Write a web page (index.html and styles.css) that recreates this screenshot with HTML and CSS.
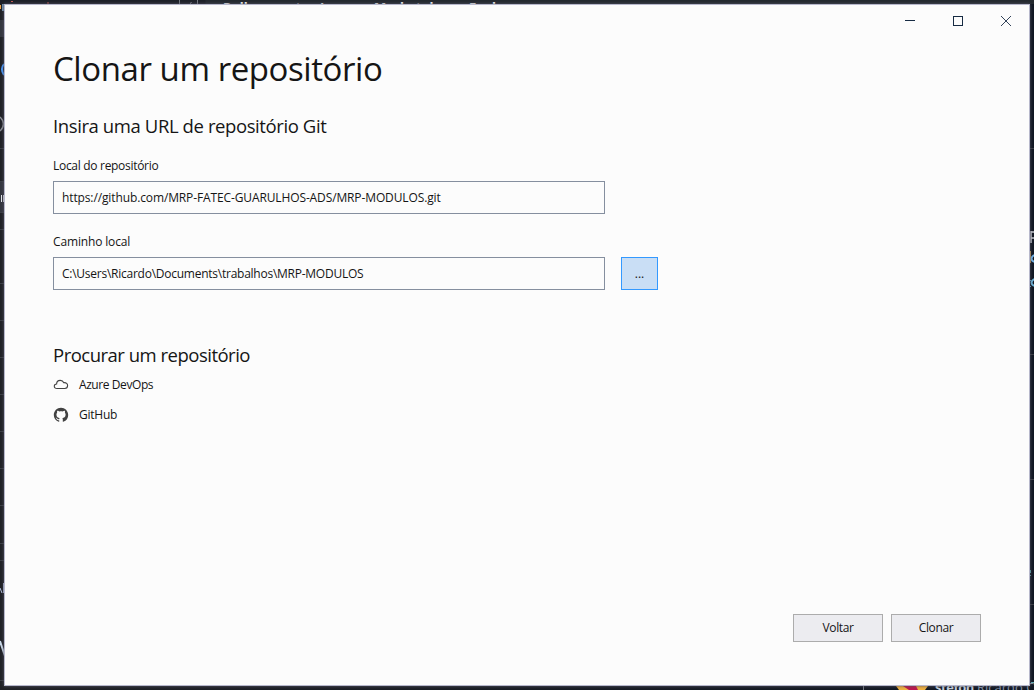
FILE: index.html
```html
<!DOCTYPE html>
<html lang="pt-BR">
<head>
<meta charset="utf-8">
<title>Clonar um repositório</title>
<link rel="stylesheet" href="styles.css">
</head>
<body>
<div class="desktop" aria-hidden="true">
  <div class="strip top"></div>
  <span class="behind nav n1">Pull requests</span>
  <span class="behind nav n2">Issues</span>
  <span class="behind nav n3">Marketplace</span>
  <span class="behind nav n4">Explore</span>
  <svg class="scene" width="1034" height="690" viewBox="0 0 1034 690">
    <path d="M0 20.5h5M0 148.5h5M0 181.5h5M0 212.5h5M0 229.5h5M0 283.5h5M0 320.5h5M0 357.5h5M0 394.5h5M0 431.5h5M0 468.5h5M0 505.5h5M0 543.5h5M0 560.5h5M0 680.5h5M1029 148.5h5M1029 354.5h5M1029 479.5h5M1029 604.5h5" stroke="#3b3e45"/>
    <path d="M0 20h5v17H0zM0 182h5v30H0z" fill="#34363f"/>
    <path d="M179.500 0v4M197.500 0v4M863.500 686v4" stroke="#777b83"/>
    <path d="M190 3.500l1.500-1" stroke="#9ca0a8"/>
    <path d="M11 1.500h2M47 3h2" stroke="#c65b55"/>
    <path d="M0 5h1v4H0z" fill="#eca54a"/>
    <path d="M2 4h2v7H2z" fill="#7797b3"/>
    <path d="M4 64q-4 5 0 11" fill="none" stroke="#4a9cff" stroke-width="2"/>
    <path d="M0 117q7 7 0 14" fill="none" stroke="#8b8e95" stroke-width="1.500"/>
    <path d="M1 195h1v7H1zM3 195h1v7H3z" fill="#e8ebf0"/>
    <path d="M0 588l2 5M3.500 583v10" fill="none" stroke="#b9c5e2"/>
    <path d="M0 641l5 15" fill="none" stroke="#cbd9e9" stroke-width="2"/>
    <path d="M1031 231v12M1031 232h3M1031 238h3" fill="none" stroke="#c9ccd2" stroke-width="1.500"/>
    <path d="M1030.500 251v12" stroke="#c69b59"/>
    <path d="M1034 255q-5 4 0 7" fill="none" stroke="#73b4e8" stroke-width="2"/>
    <path d="M1034 279q-5 4 0 7M1030 280v1M1030 286v1" fill="none" stroke="#70b6dc" stroke-width="2"/>
    <path d="M1030 570h1v3h-1zM1030 575h1v1h-1zM1031 682h3v1h-3z" fill="#5faeb4"/>
    <path d="M896 686h32l-3 4h-26z" fill="#f0b03f"/>
    <path d="M903 686h13l2 4h-9z" fill="#bd164c"/>
  </svg>
  <span class="behind foot f1">stefon</span>
  <span class="behind foot f2">Ricardo C</span>
</div>
<main class="window">
  <header class="titlebar">
    <svg class="control" viewBox="0 0 48 32"><path d="M19 16.500h10"/></svg>
    <svg class="control" viewBox="0 0 48 32"><rect x="19.500" y="12.500" width="9" height="9"/></svg>
    <svg class="control close" viewBox="0 0 48 32"><path d="M19 12l10 10M29 12l-10 10"/></svg>
  </header>
  <section class="content">
    <h1><span class="t-title">Clonar um repositório</span></h1>
    <h2 class="url-heading"><span class="t-url">Insira uma URL de repositório Git</span></h2>
    <label class="first-label"><span class="t-local">Local do repositório</span></label>
    <div class="field"><span class="t-git">https://github.com/MRP-FATEC-GUARULHOS-ADS/MRP-MODULOS.git</span></div>
    <label class="second-label"><span class="t-path-label">Caminho local</span></label>
    <div class="path-row">
      <div class="field"><span class="t-path">C:\Users\Ricardo\Documents\trabalhos\MRP-MODULOS</span></div>
      <button class="browse">...</button>
    </div>
    <h2 class="search-heading"><span class="t-search">Procurar um repositório</span></h2>
    <div class="provider">
      <svg width="16" height="16" viewBox="0 0 16 16"><path d="M4 12.500C2.300 12.500 1.300 11.500 1.300 10.200C1.300 8.900 2.300 8 3.600 8C3.700 5.600 5.300 4.400 7.200 4.400C8.900 4.400 10.200 5.300 10.800 6.700C13.300 6.400 14.600 7.700 14.600 9.500C14.600 11.300 13.500 12.500 11.800 12.500Z" fill="none" stroke="#424242" stroke-width="1.100"/></svg>
      <span class="t-azure">Azure DevOps</span>
    </div>
    <div class="provider">
      <svg width="16" height="16" viewBox="0 0 16 16"><path transform="translate(.8 .8) scale(.9)" fill="#424242" d="M8 0C3.580 0 0 3.580 0 8c0 3.540 2.290 6.530 5.470 7.590.4.070.55-.17.55-.38 0-.19-.01-.82-.01-1.490-2.010.37-2.530-.49-2.690-.94-.09-.23-.48-.94-.82-1.130-.28-.15-.68-.52-.01-.53.63-.01 1.080.58 1.230.82.72 1.210 1.870.87 2.330.66.07-.52.28-.87.51-1.070-1.780-.2-3.640-.89-3.640-3.950 0-.87.31-1.590.82-2.150-.08-.2-.36-1.020.08-2.120 0 0 .67-.21 2.200.82.64-.18 1.320-.27 2-.27s1.360.09 2 .27c1.530-1.040 2.200-.82 2.200-.82.44 1.100.16 1.920.08 2.120.51.56.82 1.270.82 2.150 0 3.070-1.870 3.750-3.650 3.950.29.25.54.73.54 1.480 0 1.070-.01 1.930-.01 2.200 0 .21.15.46.55.38A8 8 0 0 0 16 8c0-4.420-3.580-8-8-8z"/></svg>
      <span class="t-github">GitHub</span>
    </div>
  </section>
  <footer class="actions"><button>Voltar</button><button>Clonar</button></footer>
</main>
</body>
</html>
```
FILE: styles.css
```css
* { box-sizing: border-box; }
body {
  margin: 0;
  height: 690px;
  padding: 4px;
  overflow: hidden;
  background: #1b1e26;
  font: 12px/16px "Open Sans", "Noto Sans", sans-serif;
  color: #151515;
}
.desktop { position: absolute; inset: 0; overflow: hidden; background: linear-gradient(90deg, #202126, #191c24 50%, #111722); }
.scene { position: absolute; inset: 0; }
.strip { height: 4px; background: linear-gradient(90deg, #1d2028 205px, #24292f 206px); }
.behind { position: absolute; white-space: nowrap; }
.nav { top: -1px; color: #fff; font-size: 13px; font-weight: 700; }
.n1 { left: 223px; }
.n2 { left: 320px; }
.n3 { left: 374px; }
.n4 { left: 469px; }
.foot { top: 679px; color: #8998ac; font-size: 13px; line-height: 16px; }
.f1 { left: 935px; color: #c5d0dc; font-weight: 700; letter-spacing: -.4px; }
.f2 { left: 977px; }
.window {
  position: relative;
  display: flex;
  flex-direction: column;
  width: 1026px;
  height: 682px;
  border: 1px solid #b7b8cc;
  background: #fcfcfc;
  box-shadow: 0 0 3px #555665;
}
.titlebar { display: flex; justify-content: flex-end; height: 32px; margin-right: -1px; margin-top: -1px; }
.control { width: 48px; height: 32px; fill: none; stroke: #172b43; stroke-width: 1; }
.close { stroke: #34445a; }
.content { display: flex; flex-direction: column; padding: 10px 48px 0; flex: 1; }
h1, h2 { margin: 0; font-weight: 370; white-space: nowrap; }
h1 { font-size: 33px; line-height: 46px; }
h2 { font-size: 18.500px; line-height: 26px; }
.t-title { letter-spacing: -.43px; }
.t-url { letter-spacing: -.4px; }
.t-local { letter-spacing: -.3px; }
.t-git { letter-spacing: -.12px; }
.t-path-label { letter-spacing: -.15px; }
.t-path { letter-spacing: -.25px; }
.t-search { letter-spacing: -.5px; }
.t-azure { letter-spacing: -.42px; }
.t-github { letter-spacing: -.25px; }
.url-heading { margin-top: 21px; }
.first-label { margin-top: 19px; }
.second-label { margin-top: 20px; }
.field {
  display: flex;
  align-items: center;
  width: 552px;
  height: 33px;
  margin-top: 7px;
  padding: 0 8px;
  border: 1px solid #858f9f;
  white-space: nowrap;
}
.path-row { display: flex; gap: 16px; }
button { padding: 0; border: 1px solid #acacac; background: #ececf0; font: inherit; color: inherit; }
.browse { width: 37px; height: 33px; margin-top: 7px; border-color: #3399ff; background: #c9def5; }
.search-heading { margin: 52px 0 9px; }
.provider { display: flex; align-items: center; gap: 10px; height: 16px; margin-bottom: 14px; }
.provider svg { position: relative; top: -1px; }
.provider + .provider svg { top: 0; }
.actions { display: flex; justify-content: flex-end; gap: 8px; padding: 0 48px 43px; }
.actions button { width: 90px; height: 28px; letter-spacing: -.4px; }
```
